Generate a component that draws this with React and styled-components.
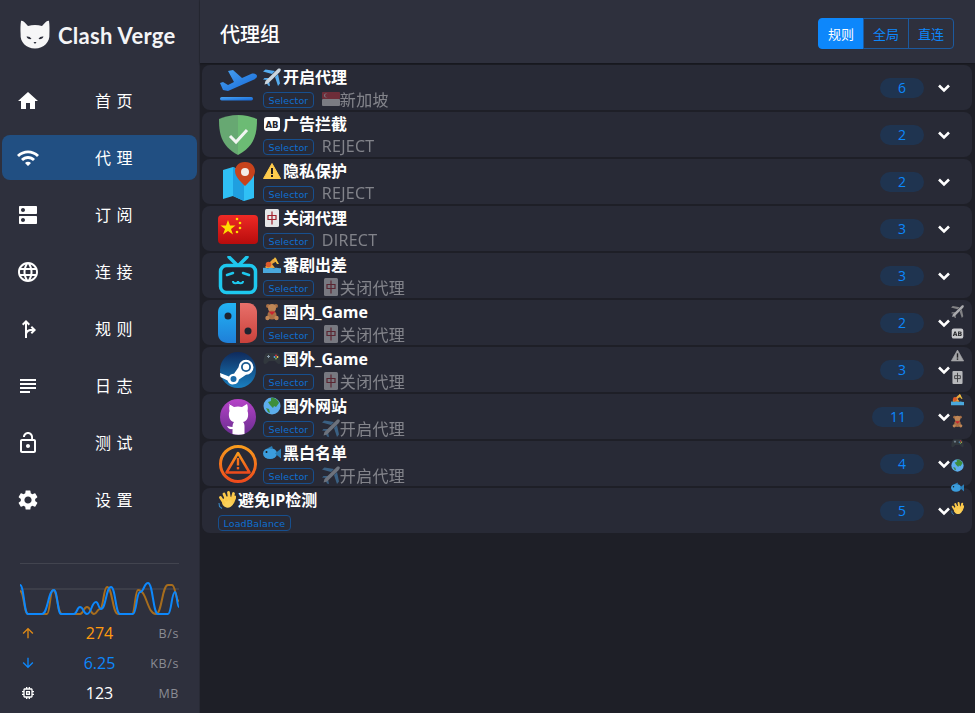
import React from 'react';
import styled, { createGlobalStyle } from 'styled-components';
import {
  MdHome, MdWifi, MdDns, MdLanguage, MdForkRight, MdSubject, MdLockOpen, MdSettings,
  MdArrowUpward, MdArrowDownward, MdMemory,
} from 'react-icons/md';

const GlobalStyle = createGlobalStyle`
  html, body { margin: 0; padding: 0; height: 100%; background: #1e1f27; }
  body { font-family: "Open Sans", "Noto Sans CJK SC", sans-serif; overflow: hidden; }
`;

const Layout = styled.div`
  position: relative;
  display: flex;
  width: 975px;
  height: 713px;
  overflow: hidden;
`;

const Sidebar = styled.aside`
  width: 199px;
  flex: none;
  display: flex;
  flex-direction: column;
  background: #2e303d;
  border-right: 1px solid #282a35;
`;

const Logo = styled.div`
  height: 70px;
  display: flex;
  align-items: center;
  gap: 8px;
  padding-left: 20px;
  box-sizing: border-box;
`;

const LogoText = styled.span`
  color: #f4f4f6;
  font-family: "Lato", sans-serif;
  font-size: 22px;
  font-weight: 700;
  letter-spacing: 0.3px;
  white-space: nowrap;
`;

const Nav = styled.nav`
  display: flex;
  flex-direction: column;
  gap: 12px;
  padding: 8px 0 0 2px;
`;

const NavItem = styled.div`
  width: 195px;
  height: 45px;
  display: flex;
  align-items: center;
  box-sizing: border-box;
  padding-left: 14px;
  border-radius: 8px;
  color: #fff;
  background: ${props => (props.$active ? '#214f82' : 'transparent')};
  svg { width: 24px; height: 24px; flex: none; }
`;

const NavLabel = styled.span`
  margin: 0 0 2px 55px;
  font-size: 16px;
  letter-spacing: 5.5px;
`;

const Traffic = styled.div`
  margin: auto 20px 0;
  padding-top: 18px;
  border-top: 1px solid #42444f;
  height: 150px;
  box-sizing: border-box;
`;

const Graph = styled.svg`
  display: block;
  width: 159px;
  height: 36px;
`;

const TrafficRow = styled.div`
  display: grid;
  grid-template-columns: 48px 1fr 48px;
  align-items: center;
  height: 30px;
  color: ${props => props.$color};
  svg { width: 16px; height: 16px; }
`;

const TrafficValue = styled.span`
  text-align: center;
  font-size: 16px;
  color: ${props => props.$color || 'inherit'};
`;

const TrafficUnit = styled.span`
  text-align: right;
  font-size: 12.5px;
  letter-spacing: 0.6px;
  color: #8b8c94;
`;

const Main = styled.main`
  flex: 1;
  min-width: 0;
  display: flex;
  flex-direction: column;
`;

const Header = styled.header`
  height: 63px;
  flex: none;
  display: flex;
  align-items: center;
  justify-content: space-between;
  padding: 3px 21px 0 20px;
  box-sizing: border-box;
  background: #2e303d;
  box-shadow: 0 1px 2px rgba(0, 0, 0, 0.3);
`;

const Title = styled.h1`
  margin: 0;
  color: #fff;
  font-size: 20px;
  font-weight: 500;
`;

const ModeGroup = styled.div`
  display: flex;
`;

const ModeButton = styled.div`
  width: 46px;
  height: 31px;
  display: flex;
  align-items: center;
  justify-content: center;
  box-sizing: border-box;
  font-size: 13px;
  border: 1px solid #1c5a9f;
  margin-left: -1px;
  color: ${props => (props.$active ? '#fff' : '#0d87fb')};
  background: ${props => (props.$active ? '#0d87fb' : 'transparent')};
  border-color: ${props => (props.$active ? '#0d87fb' : '#1c5a9f')};
  &:first-child { border-radius: 4px 0 0 4px; margin-left: 0; }
  &:last-child { border-radius: 0 4px 4px 0; }
`;

const List = styled.section`
  display: flex;
  flex-direction: column;
  gap: 2px;
  padding: 2px 3px 0 2px;
`;

const Row = styled.div`
  height: 45px;
  display: flex;
  align-items: center;
  box-sizing: border-box;
  padding-left: 16px;
  border-radius: 8px;
  background: #282a36;
`;

const RowIcon = styled.div`
  width: 40px;
  height: 40px;
  flex: none;
  margin-right: 5px;
  svg { display: block; width: 40px; height: 40px; }
`;

const RowText = styled.div`
  flex: 1;
  min-width: 0;
  display: flex;
  flex-direction: column;
  gap: 1px;
`;

const RowTitle = styled.div`
  display: flex;
  align-items: center;
  gap: 2px;
  height: 22px;
  color: #fff;
  font-size: 16px;
  font-weight: 700;
  line-height: 22px;
  white-space: nowrap;
`;

const RowMeta = styled.div`
  display: flex;
  align-items: center;
  height: 20px;
`;

const Tag = styled.span`
  height: 16px;
  padding: 0 4.5px;
  display: inline-flex;
  align-items: center;
  box-sizing: border-box;
  margin: 2px 8px 0 0;
  border: 1px solid #174f8e;
  border-radius: 4px;
  color: #0f6fd0;
  font-family: "DejaVu Sans", sans-serif;
  font-size: 9.5px;
  letter-spacing: 0.1px;
`;

const Current = styled.span`
  display: flex;
  align-items: center;
  color: #fff;
  opacity: 0.42;
  font-size: 16px;
  letter-spacing: 0.3px;
  white-space: nowrap;
`;

const Count = styled.div`
  height: 20px;
  padding: 0 18px;
  box-sizing: border-box;
  display: flex;
  align-items: center;
  justify-content: center;
  flex: none;
  border-radius: 10px;
  background: #1f3450;
  color: #0d87fb;
  font-size: 14px;
`;

const Chevron = styled.svg`
  flex: none;
  width: 24px;
  height: 24px;
  margin: 0 16px 0 8px;
  fill: none;
  stroke: #fff;
  stroke-width: 2.6;
`;

const IndexColumn = styled.div`
  position: absolute;
  top: 301px;
  left: 951px;
  display: flex;
  flex-direction: column;
  align-items: center;
  width: 12px;
`;

const IndexItem = styled.div`
  height: 21.9px;
  display: flex;
  align-items: center;
  filter: ${props => (props.$muted ? 'grayscale(1) opacity(0.75)' : 'none')};
  svg { width: 13px; height: 13px; display: block; }
`;

const EmojiBox = styled.span`
  display: inline-flex;
  flex: none;
  svg { display: block; width: 18px; height: 18px; }
`;

const Plane = () => (
  <svg viewBox="0 0 18 18">
    <path d="M9 6L0 3.500 2.500 1.500 12 3zM12 9l3 9 2-2.500L15 6zM5 12L0 11.500l1.500-1.500 5 0zM6 13l1 5-2-.5-1.500-3.500z" fill="#55acee" />
    <path d="M15 .8c1-.7 2.800-.5 2.800 1 0 .8-.5 1.600-1.300 2.400L5 15.500l-3.500 1 1-3.500z" fill="#ccd6dd" />
  </svg>
);

const AbBadge = () => (
  <svg viewBox="0 0 18 18">
    <rect x="1" y="2" width="16" height="14" rx="3" fill="#fff" />
    <text x="9" y="12.500" fontSize="8.500" fontWeight="700" textAnchor="middle" fill="#23242e" fontFamily="DejaVu Sans">AB</text>
  </svg>
);

const Warning = () => (
  <svg viewBox="0 0 18 18">
    <path d="M9 1.500L17.500 16.500H.5z" fill="#ffcc4d" stroke="#ffcc4d" strokeLinejoin="round" />
    <rect x="8" y="6" width="2" height="6" fill="#231f20" />
    <rect x="8" y="13" width="2" height="2" fill="#231f20" />
  </svg>
);

const Mahjong = () => (
  <svg viewBox="0 0 18 18">
    <rect x="2" y="0" width="14" height="18" rx="1.500" fill="#e6e7e8" />
    <path d="M9 2.500v13M5 6.500h8v4H5z" stroke="#a0202c" strokeWidth="1.200" fill="none" />
  </svg>
);

const Swimmer = () => (
  <svg viewBox="0 0 18 18">
    <path d="M2 11l8-8 3-1 1 3-5 3 3 4H3z" fill="#e8a33d" />
    <circle cx="5.500" cy="8.500" r="2.800" fill="#dd5a2b" />
    <path d="M12 1l4 7h-2l-3-5z" fill="#f0c040" />
    <path d="M0 12c2-1 4 1 6 0s4 1 6 0 4 1 6 0v5H0z" fill="#4aa8dc" />
  </svg>
);

const Teddy = () => (
  <svg viewBox="0 0 18 18">
    <circle cx="5" cy="3" r="2" fill="#a86f45" />
    <circle cx="13" cy="3" r="2" fill="#a86f45" />
    <circle cx="9" cy="5" r="4" fill="#bf8656" />
    <ellipse cx="9" cy="12" rx="4.500" ry="4.500" fill="#a86f45" />
    <circle cx="4.500" cy="15" r="2.200" fill="#bf8656" />
    <circle cx="13.500" cy="15" r="2.200" fill="#bf8656" />
    <path d="M5.500 8.500h7L9 12z" fill="#c8242f" />
  </svg>
);

const Gamepad = () => (
  <svg viewBox="0 0 18 18">
    <path d="M4 3h10c2 0 3.500 6 3.500 9 0 2-2 3-3.500 1l-2-2H6l-2 2c-1.500 2-3.500 1-3.500-1 0-3 1.500-9 3.500-9z" fill="#31373d" />
    <path d="M4 6.500h3M5.500 5v3" stroke="#8899a6" strokeWidth="1" />
    <circle cx="13" cy="5.500" r=".9" fill="#dd2e44" />
    <circle cx="14.500" cy="7" r=".9" fill="#ffcc4d" />
    <circle cx="11.500" cy="7" r=".9" fill="#55acee" />
    <circle cx="13" cy="8.500" r=".9" fill="#77b255" />
  </svg>
);

const Globe = () => (
  <svg viewBox="0 0 18 18">
    <circle cx="9" cy="9" r="8.500" fill="#5dadec" />
    <path d="M8 1c3-1 7 2 8 5l-3 4-2-1-1 2-3-3-2-3 3-1zM3 11l3 1 1 4-2-1z" fill="#3e8e3c" />
  </svg>
);

const Fish = () => (
  <svg viewBox="0 0 18 18">
    <ellipse cx="7" cy="9.500" rx="7" ry="5.500" fill="#3b9ddd" />
    <path d="M12 9.500l6-5v10zM5 4l4-2 1 3z" fill="#2a7fb8" />
    <circle cx="3.500" cy="8" r="1" fill="#1c1c1c" />
  </svg>
);

const Clap = () => (
  <svg viewBox="0 0 18 18">
    <ellipse cx="10" cy="11" rx="6" ry="5.500" fill="#fcd15a" transform="rotate(-30 10 11)" />
    <path d="M6 12L2.500 6.500M8.500 9L6 3M11.500 8L10.500 1.500M14 8.500L15.500 2.500M15 11L17 6" stroke="#fcc94a" strokeWidth="2.800" strokeLinecap="round" />
    <path d="M1 12l.5 3.500 2.500 2" stroke="#3b88c3" strokeWidth="1.100" fill="none" />
  </svg>
);

const SingaporeFlag = () => (
  <svg viewBox="0 0 18 18">
    <rect x="0" y="2" width="18" height="7" rx="1" fill="#d0323f" />
    <rect x="0" y="9" width="18" height="7" rx="1" fill="#eeeeee" />
    <circle cx="4" cy="5.500" r="2" fill="#eee" />
    <circle cx="4.800" cy="5.500" r="1.800" fill="#d0323f" />
  </svg>
);

const CatLogo = () => (
  <svg width="30" height="30" viewBox="0 0 30 30">
    <path d="M1 1c1-.8 2.500.2 3.500 1.200L8 6c4.500-1.400 9.500-1.400 14 0l3.500-3.800c1-1 2.500-2 3.500-1.200.6 4 .6 8.500.4 13C30 22 24 28.500 15 28.500S0 22 .6 14C.4 9.500.4 5 1 1z" fill="#f6f6f7" />
    <path d="M6.500 16.500c2-.3 4 .3 5 2.500-2.300.5-4.300-.4-5-2.500zM23.500 16.500c-2-.3-4 .3-5 2.500 2.300.5 4.300-.4 5-2.500z" fill="#2e303d" />
    <path d="M13.500 22h3L15 24z" fill="#2e303d" />
  </svg>
);

const TakeoffIcon = () => (
  <svg viewBox="0 0 40 40">
    <defs>
      <linearGradient id="planeFill" x1="0" y1="0" x2="1" y2="1">
        <stop offset="0" stopColor="#4aa3f0" />
        <stop offset="1" stopColor="#1467d8" />
      </linearGradient>
    </defs>
    <path d="M10 3l5-1 9 8 9-4c3-1 6 0 6 2s-2 3-4 4L10 23l-5-1-3-7 3-1 5 3 6-3z" fill="url(#planeFill)" />
    <rect x="2" y="29" width="33" height="3.500" rx="1.700" fill="url(#planeFill)" />
  </svg>
);

const ShieldIcon = () => (
  <svg viewBox="0 0 40 40">
    <path d="M20 0C13 0 6 2 1 4c0 12 1 27 19 36z" fill="#67a872" />
    <path d="M20 0c7 0 14 2 19 4 0 12-1 27-19 36z" fill="#6cbb74" />
    <path d="M12 21l6 6 11-12" stroke="#f2f5f2" strokeWidth="3" fill="none" />
  </svg>
);

const MapIcon = () => (
  <svg viewBox="0 0 40 40">
    <path d="M5 8l10-3 11 5 10-3v29l-10 3-11-5-10 3z" fill="#2fc0f5" />
    <path d="M15 5l11 5v29l-11-5z" fill="#1f9fe0" />
    <path d="M27 0c-7 0-10 5-10 9 0 6 6 11 10 15 4-4 10-9 10-15 0-4-3-9-10-9z" fill="#c8431c" />
    <circle cx="27" cy="10" r="4" fill="#f3ece6" />
  </svg>
);

const ChinaFlagIcon = () => (
  <svg viewBox="0 0 40 40">
    <defs>
      <linearGradient id="flagFill" x1="0" y1="0" x2="0" y2="1">
        <stop offset="0" stopColor="#ee2a25" />
        <stop offset="1" stopColor="#b80c0c" />
      </linearGradient>
    </defs>
    <rect x="0" y="6" width="40" height="29" rx="4" fill="url(#flagFill)" />
    <path d="M10 11l2 5.500h5.500l-4.500 3.500 2 5.500-5-3.500-5 3.500 2-5.500-4.500-3.500H8z" fill="#ffde00" />
    <circle cx="19" cy="10" r="1.300" fill="#ffde00" />
    <circle cx="22" cy="14" r="1.300" fill="#ffde00" />
    <circle cx="22" cy="19" r="1.300" fill="#ffde00" />
    <circle cx="19" cy="23" r="1.300" fill="#ffde00" />
  </svg>
);

const BilibiliIcon = () => (
  <svg viewBox="0 0 40 40">
    <rect x="2.500" y="9.500" width="35" height="27" rx="6" fill="#1f2430" stroke="#1ec8ee" strokeWidth="3.500" />
    <path d="M11 1l8 8M29 1l-8 8" stroke="#1ec8ee" strokeWidth="3.500" strokeLinecap="round" />
    <path d="M9 19l6-2M31 19l-6-2" stroke="#1ec8ee" strokeWidth="2.500" strokeLinecap="round" />
    <path d="M15 25c0 3 5 3 5 0 0 3 5 3 5 0" stroke="#1ec8ee" strokeWidth="2" fill="none" />
  </svg>
);

const SwitchIcon = () => (
  <svg viewBox="0 0 40 40">
    <defs>
      <linearGradient id="joyLeft" x1="0" y1="0" x2="0" y2="1">
        <stop offset="0" stopColor="#22b4f5" />
        <stop offset="1" stopColor="#1f7fd8" />
      </linearGradient>
      <linearGradient id="joyRight" x1="0" y1="0" x2="0" y2="1">
        <stop offset="0" stopColor="#e8706a" />
        <stop offset="1" stopColor="#c9413b" />
      </linearGradient>
    </defs>
    <path d="M18 0h-8C4 0 0 4 0 9v22c0 5 4 9 10 9h8z" fill="url(#joyLeft)" />
    <path d="M22 0h7c6 0 10 4 10 9v22c0 5-4 9-10 9h-7z" fill="url(#joyRight)" />
    <circle cx="10" cy="13" r="3.500" fill="#1e2430" />
    <circle cx="30" cy="28" r="3.500" fill="#1e2430" />
  </svg>
);

const SteamIcon = () => (
  <svg viewBox="0 0 40 40">
    <defs>
      <linearGradient id="steamFill" x1="0" y1="0" x2="0" y2="1">
        <stop offset="0" stopColor="#0f2a5c" />
        <stop offset="1" stopColor="#1a80c0" />
      </linearGradient>
    </defs>
    <circle cx="20" cy="20" r="18" fill="url(#steamFill)" />
    <path d="M2 23l9 3.500c1-2 3-3 5-2.800l4.500-6.500a7.500 7.500 0 1 1 7.500 7.500L21 29.500a6 6 0 0 1-11.500 1L2.500 27z" fill="#fff" />
    <circle cx="28" cy="17" r="5" fill="#1a5a90" />
    <circle cx="28" cy="17" r="3.200" fill="#fff" />
    <circle cx="15.500" cy="29" r="3" fill="#1a6aa8" />
  </svg>
);

const GithubIcon = () => (
  <svg viewBox="0 0 40 40">
    <defs>
      <linearGradient id="githubFill" x1="0" y1="0" x2="0" y2="1">
        <stop offset="0" stopColor="#b643c8" />
        <stop offset="1" stopColor="#6a2d90" />
      </linearGradient>
    </defs>
    <circle cx="20" cy="20" r="18" fill="url(#githubFill)" />
    <path d="M11 7l5 3c2.500-.7 5.500-.7 8 0l5-3c1 2 1 5 .5 7 1.500 4 .5 10-4.500 11 1 1 1.500 2.500 1.500 4v8c-4 1-8 1-12 0v-5c-2 .5-4 0-5.500-3 1.500 0 2.500 1 5.500 1 0-2 .5-4 1.500-5-5-1-6-7-4.500-11-.5-2-.5-5 .5-7z" fill="#fff" />
  </svg>
);

const AlertIcon = () => (
  <svg viewBox="0 0 40 40">
    <defs>
      <linearGradient id="alertFill" x1="0" y1="0" x2="0" y2="1">
        <stop offset="0" stopColor="#f99b1c" />
        <stop offset="1" stopColor="#ee4b1c" />
      </linearGradient>
    </defs>
    <circle cx="20" cy="20" r="17.500" fill="none" stroke="url(#alertFill)" strokeWidth="3" />
    <path d="M20 9l11.500 19.500h-23z" fill="none" stroke="url(#alertFill)" strokeWidth="2.500" strokeLinejoin="round" />
    <rect x="18.800" y="14" width="2.400" height="7.500" fill="#f2701c" />
    <rect x="18.800" y="23" width="2.400" height="2.400" fill="#f0601c" />
  </svg>
);

// each line is [x, y] in the chart's 159 wide box, y 27 is the zero line
const uploadPoints = [[0, 4], [8, 27], [27, 27], [33, 3], [42, 27], [60, 27], [67, 20], [74, 27], [80, 22], [87, 0],
  [98, 27], [112, 27], [118, 3], [136, 27], [148, -2], [152, -2], [159, 14]];
const downloadPoints = [[0, -2], [8, 27], [22, 27], [34, 3], [41, 27], [54, 27], [60, 20], [67, 27], [76, 15], [81, 22], [91, 0],
  [100, 27], [113, 27], [120, 5], [128, -4], [138, 27], [148, 27], [155, 5], [159, 20]];

const toPath = (points) => points.reduce((d, [x, y], i) => {
  if (i === 0) return `M${x} ${y + 5}`;
  const [px, py] = points[i - 1];
  const mid = (px + x) / 2;
  return `${d} C${mid} ${py + 5} ${mid} ${y + 5} ${x} ${y + 5}`;
}, '');

const navItems = [
  { label: '首页', Icon: MdHome },
  { label: '代理', Icon: MdWifi, active: true },
  { label: '订阅', Icon: MdDns },
  { label: '连接', Icon: MdLanguage },
  { label: '规则', Icon: MdForkRight },
  { label: '日志', Icon: MdSubject },
  { label: '测试', Icon: MdLockOpen },
  { label: '设置', Icon: MdSettings },
];

const groups = [
  { Icon: TakeoffIcon, Emoji: Plane, name: '开启代理', type: 'Selector', NowEmoji: SingaporeFlag, now: '新加坡', count: 6, muted: true },
  { Icon: ShieldIcon, Emoji: AbBadge, name: '广告拦截', type: 'Selector', now: 'REJECT', count: 2, muted: true },
  { Icon: MapIcon, Emoji: Warning, name: '隐私保护', type: 'Selector', now: 'REJECT', count: 2, muted: true },
  { Icon: ChinaFlagIcon, Emoji: Mahjong, name: '关闭代理', type: 'Selector', now: 'DIRECT', count: 3, muted: true },
  { Icon: BilibiliIcon, Emoji: Swimmer, name: '番剧出差', type: 'Selector', NowEmoji: Mahjong, now: '关闭代理', count: 3 },
  { Icon: SwitchIcon, Emoji: Teddy, name: '国内_Game', type: 'Selector', NowEmoji: Mahjong, now: '关闭代理', count: 2 },
  { Icon: SteamIcon, Emoji: Gamepad, name: '国外_Game', type: 'Selector', NowEmoji: Mahjong, now: '关闭代理', count: 3 },
  { Icon: GithubIcon, Emoji: Globe, name: '国外网站', type: 'Selector', NowEmoji: Plane, now: '开启代理', count: 11 },
  { Icon: AlertIcon, Emoji: Fish, name: '黑白名单', type: 'Selector', NowEmoji: Plane, now: '开启代理', count: 4 },
  { Emoji: Clap, name: '避免IP检测', type: 'LoadBalance', count: 5 },
];

const GroupRow = ({ group }) => {
  const { Icon, Emoji, NowEmoji, name, type, now, count } = group;
  return (
    <Row>
      {Icon && <RowIcon><Icon /></RowIcon>}
      <RowText>
        <RowTitle>
          <EmojiBox><Emoji /></EmojiBox>
          {name}
        </RowTitle>
        <RowMeta>
          <Tag>{type}</Tag>
          {now && (
            <Current>
              {NowEmoji && <EmojiBox><NowEmoji /></EmojiBox>}
              {now}
            </Current>
          )}
        </RowMeta>
      </RowText>
      <Count>{count}</Count>
      <Chevron viewBox="0 0 24 24"><path d="M7 9.500l5 5 5-5" /></Chevron>
    </Row>
  );
};

export default function App() {
  return (
    <Layout>
      <GlobalStyle />
      <Sidebar>
        <Logo>
          <CatLogo />
          <LogoText>Clash Verge</LogoText>
        </Logo>
        <Nav>
          {navItems.map(({ label, Icon, active }) => (
            <NavItem key={label} $active={active}>
              <Icon />
              <NavLabel>{label}</NavLabel>
            </NavItem>
          ))}
        </Nav>
        <Traffic>
          <Graph viewBox="0 0 159 36">
            <line x1="0" y1="7" x2="159" y2="7" stroke="#4a4c57" strokeWidth="1" />
            <path d={toPath(uploadPoints)} fill="none" stroke="#a76d1d" strokeWidth="2" />
            <path d={toPath(downloadPoints)} fill="none" stroke="#0d87fb" strokeWidth="2" />
          </Graph>
          <TrafficRow $color="#e08a16">
            <MdArrowUpward />
            <TrafficValue $color="#ff9a0e">274</TrafficValue>
            <TrafficUnit>B/s</TrafficUnit>
          </TrafficRow>
          <TrafficRow $color="#0d87fb">
            <MdArrowDownward />
            <TrafficValue>6.25</TrafficValue>
            <TrafficUnit>KB/s</TrafficUnit>
          </TrafficRow>
          <TrafficRow $color="#fff">
            <MdMemory />
            <TrafficValue>123</TrafficValue>
            <TrafficUnit>MB</TrafficUnit>
          </TrafficRow>
        </Traffic>
      </Sidebar>
      <Main>
        <Header>
          <Title>代理组</Title>
          <ModeGroup>
            <ModeButton $active>规则</ModeButton>
            <ModeButton>全局</ModeButton>
            <ModeButton>直连</ModeButton>
          </ModeGroup>
        </Header>
        <List>
          {groups.map(group => <GroupRow key={group.name} group={group} />)}
        </List>
      </Main>
      <IndexColumn>
        {groups.map(({ name, Emoji, muted }) => (
          <IndexItem key={name} $muted={muted}><Emoji /></IndexItem>
        ))}
      </IndexColumn>
    </Layout>
  );
}
